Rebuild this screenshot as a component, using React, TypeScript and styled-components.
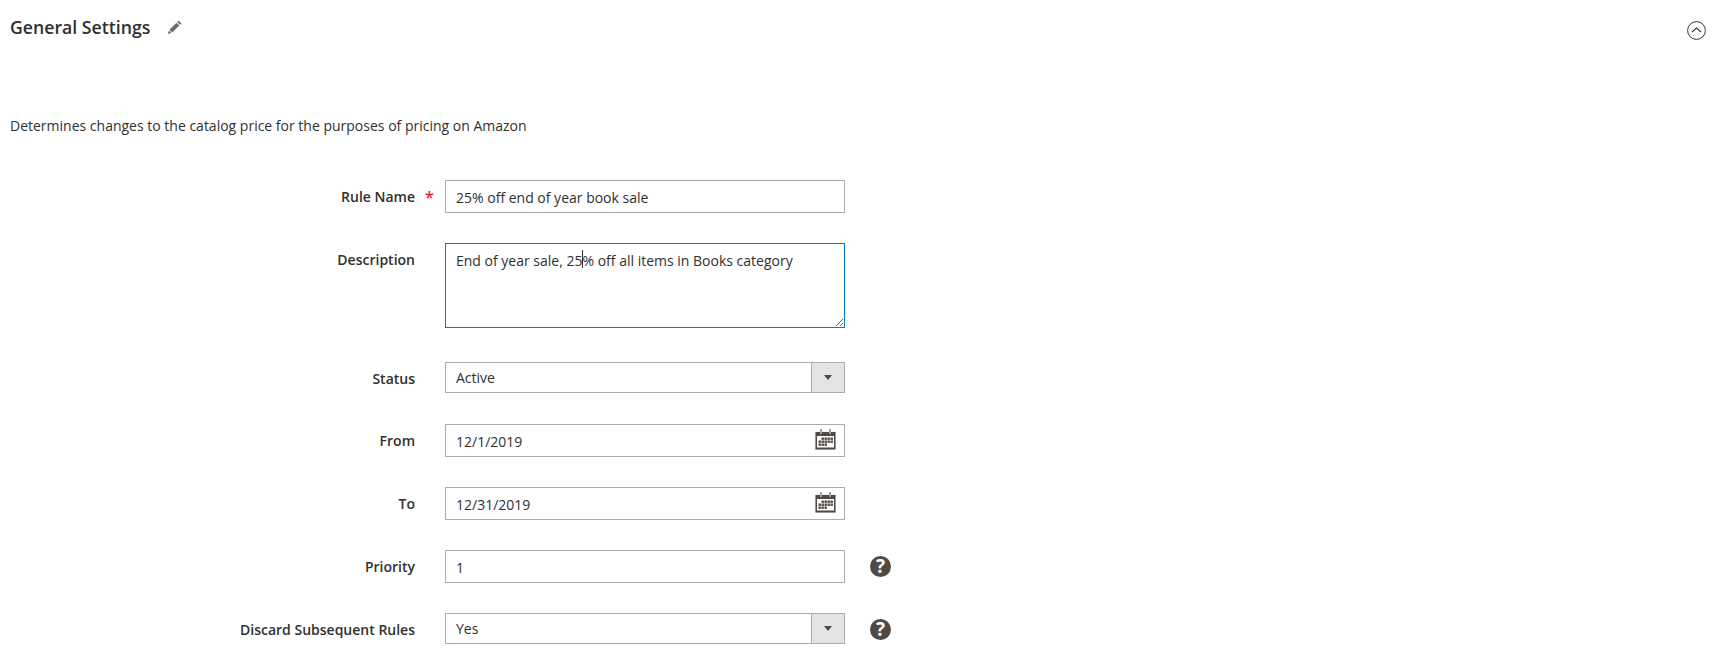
import React from "react";
import styled, { createGlobalStyle } from "styled-components";

const GlobalStyle = createGlobalStyle`
  html, body {
    margin: 0;
    padding: 0;
    background: #fff;
  }
  body {
    font-family: "Open Sans", "Liberation Sans", sans-serif;
    font-size: 14px;
    color: #303030;
  }
`;

const Page = styled.div`
  width: 1719px;
  height: 662px;
  overflow: hidden;
  box-sizing: border-box;
  padding: 0 10px;
`;

const Header = styled.div`
  display: flex;
  align-items: flex-start;
  justify-content: space-between;
  height: 114px;
  padding-top: 15px;
  box-sizing: border-box;
`;

const TitleWrap = styled.div`
  display: flex;
  align-items: center;
  gap: 18px;
`;

const Title = styled.h2`
  margin: 0;
  font-size: 17.7px;
  line-height: 24px;
  font-weight: 600;
  color: #303030;
`;

const Collapse = styled.div`
  display: flex;
  margin: 6px 3px 0 0;
`;

const Intro = styled.p`
  margin: 0 0 42px;
  font-size: 14px;
  line-height: 24px;
`;

const Form = styled.div`
  display: flex;
  flex-direction: column;
  gap: 30px;
`;

const Row = styled.div<{ $spaced?: boolean }>`
  display: flex;
  align-items: flex-start;
  margin: ${(p) => (p.$spaced ? "4px 0 1px" : "0")};
`;

const Label = styled.label`
  width: 405px;
  flex: none;
  padding-top: 7px;
  text-align: right;
  font-size: 14px;
  line-height: 20px;
  font-weight: 600;
  color: #303030;
`;

const Star = styled.span<{ $show: boolean }>`
  width: 30px;
  flex: none;
  padding: 7px 0 0 10px;
  box-sizing: border-box;
  line-height: 20px;
  font-size: 16px;
  font-weight: 600;
  color: ${(p) => (p.$show ? "#e22626" : "transparent")};
`;

const Field = styled.div`
  position: relative;
  width: 400px;
  flex: none;
`;

const TextInput = styled.input`
  display: block;
  width: 100%;
  height: 33px;
  box-sizing: border-box;
  border: 1px solid #adadad;
  padding: 1px 10px 0;
  outline: none;
  font: 14px/20px "Open Sans", "Liberation Sans", sans-serif;
  color: #303030;
  background: #fff;
`;

const TextArea = styled.textarea`
  display: block;
  width: 100%;
  height: 85px;
  box-sizing: border-box;
  border: 1px solid #007bdb;
  padding: 7px 10px;
  outline: none;
  font: 14px/20px "Open Sans", "Liberation Sans", sans-serif;
  color: #303030;
  background: #fff;
`;

const Caret = styled.span`
  position: absolute;
  left: 137px;
  top: 7px;
  width: 1px;
  height: 18px;
  background: #303030;
`;

const SelectBox = styled.div`
  display: flex;
  height: 31px;
  box-sizing: border-box;
  border: 1px solid #adadad;
  background: #fff;
`;

const SelectValue = styled.div`
  flex: 1;
  padding: 1px 0 0 10px;
  font-size: 14px;
  line-height: 27px;
  color: #303030;
`;

const SelectArrow = styled.div`
  display: flex;
  align-items: center;
  justify-content: center;
  width: 32px;
  border-left: 1px solid #adadad;
  background: #e3e3e3;

  &::after {
    content: "";
    border-style: solid;
    border-width: 5px 4.5px 0;
    border-color: #514943 transparent transparent;
  }
`;

const CalendarIcon = styled.svg`
  position: absolute;
  right: 9px;
  top: 5px;
`;

const Help = styled.div`
  display: flex;
  align-items: center;
  justify-content: center;
  width: 21px;
  height: 21px;
  margin: 6px 0 0 25px;
  border-radius: 50%;
  background: #514943;
  color: #fff;
  font-size: 19px;
  line-height: 21px;
  font-weight: 700;
`;

function Calendar() {
  const cells = [];
  for (let r = 0; r < 3; r++) {
    for (let c = 0; c < 5; c++) {
      if (r === 0 && c === 0) continue;
      if (r === 2 && c > 2) continue;
      cells.push(<rect key={`${r}-${c}`} x={3.5 + c * 3} y={8.5 + r * 3} width={2.4} height={2.4} />);
    }
  }
  return (
    <CalendarIcon width="21" height="21" viewBox="0 0 21 21" fill="#514943">
      <rect x="0" y="2.5" width="21" height="18.5" fill="#e9e7e4" />
      <rect x="0.5" y="3" width="20" height="17.5" />
      <rect x="2" y="7" width="17" height="11.5" fill="#fff" />
      <rect x="5" y="0" width="2" height="5" fill="#a59f99" />
      <rect x="14" y="0" width="2" height="5" fill="#a59f99" />
      {cells}
    </CalendarIcon>
  );
}

function Select({ value }: { value: string }) {
  return (
    <SelectBox>
      <SelectValue>{value}</SelectValue>
      <SelectArrow />
    </SelectBox>
  );
}

export default function App() {
  return (
    <Page>
      <GlobalStyle />
      <Header>
        <TitleWrap>
          <Title>General Settings</Title>
          <svg width="14" height="14" viewBox="0 0 14 14" fill="#6b6b6b">
            <path d="M10.6 0.6 13.4 3.4 12 4.8 9.2 2Z" />
            <path d="M8.5 2.7 11.3 5.5 4.2 12.6 1.4 9.8Z" />
            <path d="M0.9 10.6 3.4 13.1 0 14Z" />
          </svg>
        </TitleWrap>
        <Collapse>
          <svg width="19" height="19" viewBox="0 0 19 19" fill="none" stroke="#41362f">
            <circle cx="9.5" cy="9.5" r="8.9" strokeWidth="1" />
            <path d="M5 11 9.5 7 14 11" strokeWidth="1.1" />
          </svg>
        </Collapse>
      </Header>
      <Intro>Determines changes to the catalog price for the purposes of pricing on Amazon</Intro>
      <Form>
        <Row>
          <Label>Rule Name</Label>
          <Star $show>*</Star>
          <Field>
            <TextInput readOnly value="25% off end of year book sale" />
          </Field>
        </Row>
        <Row>
          <Label>Description</Label>
          <Star $show={false} />
          <Field>
            <TextArea readOnly value="End of year sale, 25% off all items in Books category" />
            <Caret />
          </Field>
        </Row>
        <Row $spaced>
          <Label>Status</Label>
          <Star $show={false} />
          <Field>
            <Select value="Active" />
          </Field>
        </Row>
        <Row>
          <Label>From</Label>
          <Star $show={false} />
          <Field>
            <TextInput readOnly value="12/1/2019" />
            <Calendar />
          </Field>
        </Row>
        <Row>
          <Label>To</Label>
          <Star $show={false} />
          <Field>
            <TextInput readOnly value="12/31/2019" />
            <Calendar />
          </Field>
        </Row>
        <Row>
          <Label>Priority</Label>
          <Star $show={false} />
          <Field>
            <TextInput readOnly value="1" />
          </Field>
          <Help>?</Help>
        </Row>
        <Row>
          <Label>Discard Subsequent Rules</Label>
          <Star $show={false} />
          <Field>
            <Select value="Yes" />
          </Field>
          <Help>?</Help>
        </Row>
      </Form>
    </Page>
  );
}
